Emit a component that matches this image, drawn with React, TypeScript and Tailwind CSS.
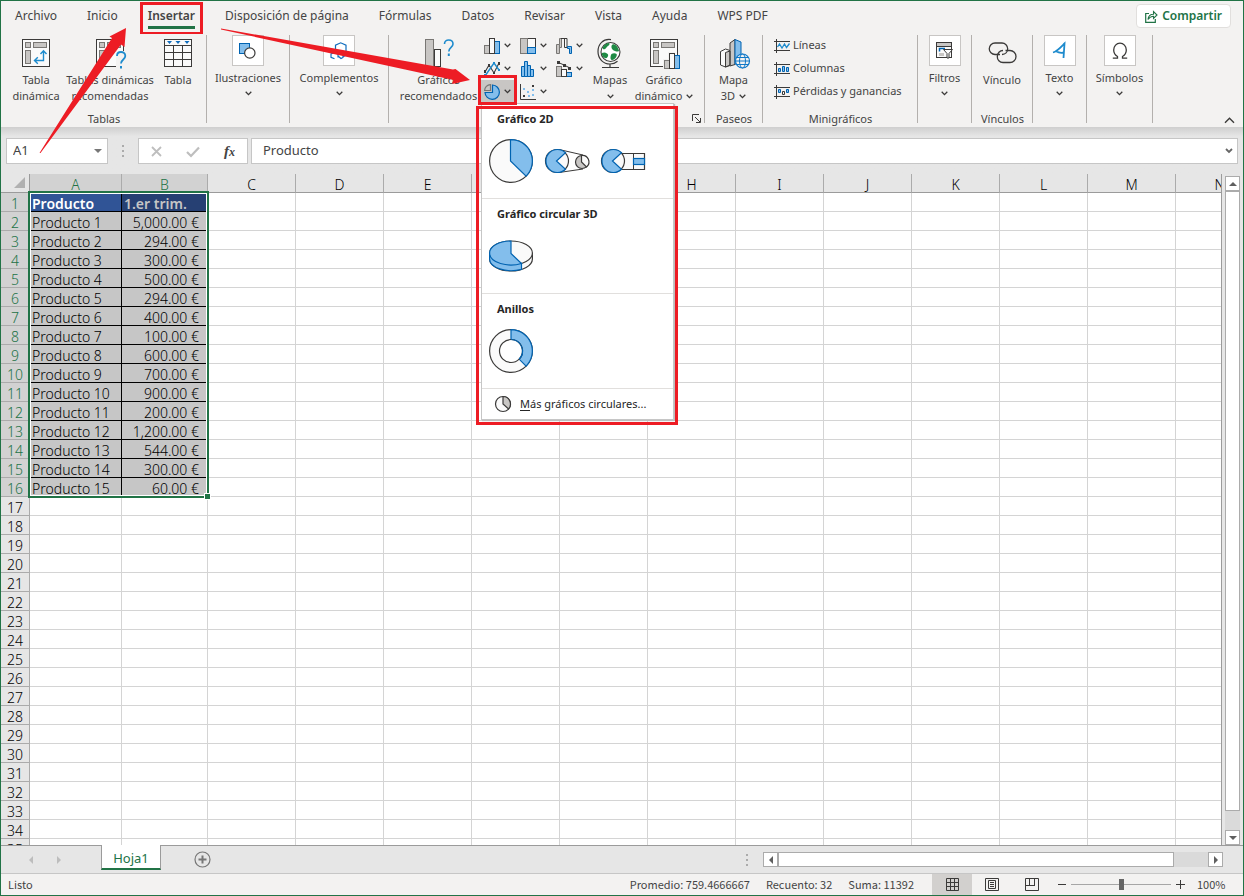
import React from 'react';
import clsx from 'clsx';

const TABS = [
  'Archivo',
  'Inicio',
  'Insertar',
  'Disposición de página',
  'Fórmulas',
  'Datos',
  'Revisar',
  'Vista',
  'Ayuda',
  'WPS PDF',
];

const COLUMNS = 'ABCDEFGHIJKLMN'.split('');
const ROW_COUNT = 35;

const DATA = [
  ['Producto', '1.er trim.'],
  ['Producto 1', '5,000.00 €'],
  ['Producto 2', '294.00 €'],
  ['Producto 3', '300.00 €'],
  ['Producto 4', '500.00 €'],
  ['Producto 5', '294.00 €'],
  ['Producto 6', '400.00 €'],
  ['Producto 7', '100.00 €'],
  ['Producto 8', '600.00 €'],
  ['Producto 9', '700.00 €'],
  ['Producto 10', '900.00 €'],
  ['Producto 11', '200.00 €'],
  ['Producto 12', '1,200.00 €'],
  ['Producto 13', '544.00 €'],
  ['Producto 14', '300.00 €'],
  ['Producto 15', '60.00 €'],
];

const DARK = '#3b3a39';
const GREY = '#c8c6c4';
const BLUE = '#0063b1';
const SKY = '#83beec';
const PAPER = '#fafafa';

/* ---------- Icons ---------- */

function Chevron({ className = '' }: { className?: string }) {
  return (
    <svg width="7" height="5" viewBox="0 0 7 5" className={clsx('shrink-0', className)} aria-hidden="true">
      <path d="M0.7 0.8 3.5 3.6 6.3 0.8" fill="none" stroke="#3b3a39" strokeWidth="1.3" />
    </svg>
  );
}

function Triangle({ dir, color = '#5f5f5f' }: { dir: 'up' | 'down' | 'left' | 'right'; color?: string }) {
  const points = {
    up: '0,6 8,6 4,2',
    down: '0,2 8,2 4,6',
    left: '6,0 6,8 2,4',
    right: '2,0 2,8 6,4',
  };
  return (
    <svg width="8" height="8" viewBox="0 0 8 8" className="shrink-0" aria-hidden="true">
      <polygon points={points[dir]} fill={color} />
    </svg>
  );
}

function Icon({ w = 28, h = 28, children }: { w?: number; h?: number; children: React.ReactNode }) {
  return (
    <svg width={w} height={h} viewBox={`0 0 ${w} ${h}`} fill="none" className="shrink-0 overflow-visible" aria-hidden="true">
      {children}
    </svg>
  );
}

// Frame with header strips shared by the pivot icons
function PivotFrame() {
  return (
    <>
      <rect x="0.5" y="0.5" width="27" height="27" fill={PAPER} stroke={DARK} />
      <rect x="3.5" y="3.5" width="5" height="5" fill={GREY} stroke="#797774" />
      <rect x="11.5" y="3.5" width="13" height="5" fill={GREY} stroke="#797774" />
      <rect x="3.5" y="11.5" width="5" height="13" fill={GREY} stroke="#797774" />
    </>
  );
}

const PivotIcon = () => (
  <Icon>
    <PivotFrame />
    <path d="M21.5 12v9.5H13M18.5 15l3-3.3 3 3.3M15.8 18.3l-3.3 3.2 3.3 3.2" stroke="#1e8bcd" strokeWidth="1.4" />
  </Icon>
);

const PivotQuestionIcon = () => (
  <Icon>
    <PivotFrame />
    <path d="M20 12h9v18h-9z" fill="#f3f2f1" />
    <path d="M21 17c0-2.6 1.8-4 4-4s4.3 1.4 4.3 4c0 3.5-4.3 3.5-4.3 7.5" stroke="#1e8bcd" strokeWidth="1.8" />
    <path d="M25 27v2.5" stroke="#1e8bcd" strokeWidth="2" />
  </Icon>
);

const TableIcon = () => (
  <Icon>
    <rect x="0.5" y="0.5" width="27" height="27" fill={PAPER} stroke={DARK} />
    <path d="M0 6.5h28M0 13.5h28M0 20.5h28M9.5 6v22M18.5 6v22" stroke={DARK} />
    <path d="M3 2h5L5.5 5zM11.5 2h5L14 5zM20.5 2h5L23 5z" fill="#0f6cbd" />
  </Icon>
);

const ShapesIcon = () => (
  <Icon w={18} h={18}>
    <rect x="0.5" y="1.5" width="10" height="10" fill={SKY} stroke={BLUE} />
    <circle cx="10.8" cy="11" r="5.2" fill="#fff" stroke={DARK} strokeWidth="1.2" />
  </Icon>
);

const AddinsIcon = () => (
  <Icon w={18} h={18}>
    <path d="M5.5 9V3.2L10.7.8 16 3.2v10l-2.5 1.3M8 15.5v-3.3L4.8 10.5 1 12v3.3l3.5 1.5M8 14l3 2.5 2-1v-4" stroke="#0f6cbd" strokeWidth="1.2" />
  </Icon>
);

const RecommendedChartsIcon = () => (
  <Icon>
    <rect x="0.5" y="0.5" width="8" height="27" fill={GREY} stroke="#797774" />
    <rect x="9.5" y="10.5" width="6" height="17" fill={PAPER} stroke={DARK} />
    <path d="M19.5 5c0-2.6 1.8-4 4.2-4S28 2.4 28 5c0 3.3-4.2 3.5-4.2 7.5" stroke="#1e8bcd" strokeWidth="1.6" />
    <path d="M23.8 14.5V17" stroke="#1e8bcd" strokeWidth="2" />
  </Icon>
);

const ColumnsIcon = () => (
  <Icon w={16} h={16}>
    <rect x="0.5" y="7.5" width="5" height="8" fill={GREY} stroke="#797774" />
    <rect x="10.5" y="3.5" width="5" height="12" fill={SKY} stroke={BLUE} />
    <rect x="5.5" y="0.5" width="5" height="15" fill={PAPER} stroke={DARK} />
  </Icon>
);

const HierarchyIcon = () => (
  <Icon w={16} h={16}>
    <rect x="7.5" y="0.5" width="8" height="9" fill={PAPER} stroke={DARK} />
    <rect x="0.5" y="0.5" width="7" height="15" fill={GREY} stroke="#797774" />
    <rect x="7.5" y="9.5" width="8" height="6" fill={SKY} stroke={BLUE} />
  </Icon>
);

const WaterfallIcon = () => (
  <Icon w={16} h={16}>
    <path d="M.5 15.5v-9h3v9zM3.5 6.5V.5h2v9h-2" fill={GREY} stroke="#797774" />
    <path d="M5 .5h6v9H8.5V.5" fill={PAPER} stroke={DARK} />
    <path d="M11.5 8.5h4v7h-2v-5h-2z" fill={SKY} stroke={BLUE} />
  </Icon>
);

const LinesIcon = () => (
  <Icon w={16} h={16}>
    <path d="M1 11 5 4l5 8 5-10" stroke={DARK} strokeWidth="1.1" />
    <path d="M1 15 10 2l5 7" stroke="#1e8bcd" strokeWidth="1.4" />
    <path d="M0 9h2v3H0zM4 3h2v3H4zM9 11h2v2H9zM14 1h2v3h-2z" fill={DARK} />
    <path d="M0 13h2v3H0zM9 1h2v2H9zM14 8h2v2h-2z" fill="#1e8bcd" />
  </Icon>
);

const HistogramIcon = () => (
  <Icon w={16} h={16}>
    <path d="M1.5 15.5v-10h3v10zM4.5 15.5V.5h3v15zM7.5 15.5v-11h3v11zM10.5 15.5v-7h3v7z" fill={SKY} stroke={BLUE} />
  </Icon>
);

const ComboIcon = () => (
  <Icon w={16} h={16}>
    <rect x="0.5" y="5.5" width="5" height="10" fill={GREY} stroke="#797774" />
    <rect x="10.5" y="11.5" width="5" height="4" fill={SKY} stroke={BLUE} />
    <rect x="5.5" y="8.5" width="5" height="7" fill={PAPER} stroke={DARK} />
    <path d="M2.5 1.5 8 4l6 3" stroke={DARK} />
    <path d="M1 0h3v3H1zM7 3h3v3H7zM12 6h3v3h-3z" fill={DARK} />
  </Icon>
);

const PieIcon = () => (
  <Icon w={16} h={16}>
    <path d="M8.5 8.5V1A7.2 7.2 0 1 1 1 8.5z" fill={SKY} stroke={BLUE} strokeWidth="1.2" />
    <path d="M6.5 6.5V.6A6 6 0 0 0 .6 6.5z" fill={GREY} stroke="#797774" strokeWidth="1.2" />
  </Icon>
);

const ScatterIcon = () => (
  <Icon w={16} h={16}>
    <path d="M.5 0v15.500H16" stroke={DARK} />
    <path d="M3 11h2v2H3zM12 1h2v2h-2z" fill={DARK} />
    <path d="M3 4h2v2H3zM7 7h2v2H7zM12 5h2v2h-2zM8 11h2v2H8zM12 10h2v2h-2z" fill={SKY} />
  </Icon>
);

const GlobeIcon = () => (
  <Icon w={26} h={30}>
    <circle cx="13.5" cy="13" r="9.5" fill="#fff" stroke={DARK} strokeWidth="1.1" />
    <path d="M6 8c1.500-2.500 4-4 6-4 1 1 .5 2-1 3S9 9.500 8 10 5 10.500 6 8zM14.500 7c.5-2 2.500-2.500 4-1 2 1.500 3.500 4.500 3.500 6-1.500 1-2.500.5-4 0s-4-2-3.500-5zM5 14c2-1 3.500-.5 5 .5s1.500 2 .5 3.500-2 1.500-3.500.5-2.500-3-2-4.500zM14.500 15c1.500-1 4-1 5 0s-.5 4-2 5-2.500 1.500-3.500.5-.5-4 .5-5.500z" fill="#1f8a44" />
    <path d="M14 .6C6-.5 1 5 1 12.500S6.500 25 13 25M13 25c3 0 5.500-1 7.500-2.800M13 25v3.500M5 28.500h17" stroke={DARK} strokeWidth="1.2" />
  </Icon>
);

const PivotChartIcon = () => (
  <Icon>
    <PivotFrame />
    <path d="M13 30V20h5v-7h7v3h5v15z" fill="#f3f2f1" />
    <rect x="14.5" y="21.5" width="5" height="8" fill={GREY} stroke="#797774" />
    <rect x="24.5" y="16.5" width="5" height="13" fill={SKY} stroke={BLUE} />
    <rect x="19.5" y="14.5" width="5" height="15" fill={PAPER} stroke={DARK} />
  </Icon>
);

const Map3DIcon = () => (
  <Icon>
    <path d="M.5 12.500 5.500 10l4.500 1.500v15L5.500 28l-5-2z" fill={PAPER} stroke={DARK} />
    <path d="M5.500 13.500 10 12v14l-4.500 2zM10 4l5-3.500v25L10 27z" fill={GREY} stroke={DARK} />
    <path d="M15 .5 21 3v22h-6z" fill={SKY} stroke={BLUE} />
    <circle cx="22.500" cy="22" r="7" fill="#f3f2f1" stroke="#0f78c8" strokeWidth="1.2" />
    <ellipse cx="22.500" cy="22" rx="3" ry="7" stroke="#0f78c8" />
    <path d="M16.500 18.500h12M15.500 22h14M16.500 25.500h12" stroke="#0f78c8" />
  </Icon>
);

const SparkFrame = () => <path d="M2.500 0v14M0 2.500h16M0 11.500h16" stroke={DARK} />;

const SparkLineIcon = () => (
  <Icon w={16} h={14}>
    <SparkFrame />
    <path d="m3.500 8 2-3 2.500 4 2.500-4 2 3.500 3-4" stroke="#1e8bcd" strokeWidth="1.3" />
  </Icon>
);

const SparkColumnIcon = () => (
  <Icon w={16} h={14}>
    <SparkFrame />
    <path d="M4.500 9.500v-3h2v3zM8.500 9.500v-5h2v5zM12.500 9.500v-4h2v4z" fill={SKY} stroke={BLUE} />
  </Icon>
);

const SparkWinLossIcon = () => (
  <Icon w={16} h={14}>
    <SparkFrame />
    <path d="M4.500 7.500v-3h2v3zM12.500 7.500v-3h2v3z" fill={SKY} stroke={BLUE} />
    <path d="M8.500 9.500v-3h2v3z" fill={PAPER} stroke={DARK} />
  </Icon>
);

const FilterIcon = () => (
  <Icon w={17} h={17}>
    <rect x="0.5" y="0.5" width="15" height="15" fill={PAPER} stroke={DARK} />
    <path d="M1 1h14v3H1z" fill={GREY} />
    <path d="M0 4.500h16" stroke={DARK} />
    <path d="M3.500 9.500v-3H9" stroke={BLUE} strokeWidth="1.5" />
    <path d="M3 11h5v3H3z" fill={GREY} />
    <path d="M7.500 7.500h9l-3.500 4v4.500h-2v-4.500z" fill="#fff" stroke={DARK} />
  </Icon>
);

const LinkIcon = () => (
  <Icon>
    <path d="M12 15.500H7a5.700 5.700 0 0 1 0-11.500h7a5.700 5.700 0 0 1 5.700 5.700c0 3.500-2.500 5.800-5.700 5.800" stroke={DARK} strokeWidth="1.3" />
    <path d="M17.500 11.500h4.500a5.700 5.700 0 0 1 0 12h-7a5.700 5.700 0 0 1-5.700-6c0-3.500 2.500-6 5.700-6" stroke={DARK} strokeWidth="1.3" />
  </Icon>
);

const TextIcon = () => (
  <Icon w={16} h={18}>
    <path d="M1 10.500C5 9.500 9 5 12.500 1.500L11.500 16M4.500 9.500C7 11 9.500 11 12 10.500" stroke="#1e8bcd" strokeWidth="1.8" />
  </Icon>
);

const OmegaIcon = () => (
  <Icon w={16} h={18}>
    <path d="M.8 16.200h4.700v-1.700C3 13 1.700 10.800 1.700 8c0-4 2.800-6.800 6.300-6.800S14.300 4 14.300 8c0 2.800-1.300 5-3.800 6.500v1.700h4.700" stroke={DARK} strokeWidth="1.3" />
  </Icon>
);

/* ---------- Ribbon ---------- */

function BigButton({
  icon,
  lines,
  width,
  arrow,
}: {
  icon: React.ReactNode;
  lines: string[];
  width: string;
  arrow?: 'inline' | 'below';
}) {
  return (
    <button type="button" className={clsx('flex shrink-0 flex-col items-center pt-1', width)}>
      <span className="flex h-[34px] items-start pt-px">{icon}</span>
      {lines.map((line, i) => (
        <span key={line} className="flex h-4 items-center gap-1 whitespace-nowrap leading-4">
          {line}
          {arrow === 'inline' && i === lines.length - 1 && <Chevron />}
        </span>
      ))}
      {arrow === 'below' && (
        <span className="flex h-4 items-center">
          <Chevron />
        </span>
      )}
    </button>
  );
}

function BoxedButton({ icon, label }: { icon: React.ReactNode; label: string }) {
  return (
    <button type="button" className="flex w-full flex-col items-center pt-px pr-px">
      <span className="flex h-[31px] w-8 items-center justify-center border border-[#c8c6c4] bg-white">{icon}</span>
      <span className="mt-1 h-4 whitespace-nowrap leading-4">{label}</span>
      <Chevron className="mt-[5px]" />
    </button>
  );
}

function Group({ label, width, children }: { label?: string; width: string; children: React.ReactNode }) {
  return (
    <section className={clsx('relative flex shrink-0 flex-col', width)}>
      <div className="flex h-[77px]">{children}</div>
      {label && <p className="h-4 text-center leading-4">{label}</p>}
      <span className="absolute right-0 top-px h-[88px] w-px bg-[#b3b0ad]" />
    </section>
  );
}

function PieMenu() {
  return (
    <div className="absolute left-px top-full z-20 w-[193px] border border-[#c6c6c6] bg-white text-[#262626] shadow-[1px_1px_1px_#bdbdbd]">
      <div className="h-[95px] border-b border-[#e1dfdd] px-[7px] pt-1.5">
        <h3 className="pl-2 font-bold leading-[17px]">Gráfico 2D</h3>
        <div className="mt-3 flex items-center gap-3">
          <button type="button" aria-label="Circular">
            <Icon w={44} h={44}>
              <circle cx="22" cy="22" r="21.400" fill={PAPER} stroke={DARK} strokeWidth="1.2" />
              <path d="M21.500.6V22L37.100 37.100A21.400 21.400 0 0 0 21.500.6z" fill={SKY} stroke={BLUE} strokeWidth="1.2" />
            </Icon>
          </button>
          <button type="button" aria-label="Subgráfico circular">
            <Icon w={44} h={26}>
              <path d="M14 1.500 38 7M14 24.500 38 21" stroke={DARK} />
              <circle cx="12" cy="13" r="11.500" fill={PAPER} stroke={DARK} strokeWidth="1.2" />
              <path d="M11.500 13 20.500 4.800a11.500 11.500 0 1 0 0 16.400z" fill={SKY} stroke={BLUE} strokeWidth="1.2" />
              <circle cx="37" cy="14" r="6.500" fill={GREY} stroke={DARK} strokeWidth="1.2" />
              <path d="M36.500 7.500V14l5 5a6.500 6.500 0 0 0-5-11.500z" fill={PAPER} stroke={DARK} strokeWidth="1.2" />
            </Icon>
          </button>
          <button type="button" aria-label="Circular con subgráfico de barras">
            <Icon w={44} h={26}>
              <path d="M19 5.500h24.500v16H19z" fill={PAPER} stroke={DARK} strokeWidth="1.2" />
              <circle cx="12" cy="13" r="11.500" fill={PAPER} stroke={DARK} strokeWidth="1.2" />
              <path d="M11.500 13 20.500 4.800a11.500 11.500 0 1 0 0 16.400z" fill={SKY} stroke={BLUE} strokeWidth="1.2" />
              <path d="M32.500 5.500v16" stroke={DARK} />
              <rect x="32.500" y="10.500" width="11" height="6" fill={SKY} stroke={BLUE} strokeWidth="1.2" />
            </Icon>
          </button>
        </div>
      </div>
      <div className="h-[95px] border-b border-[#e1dfdd] px-[7px] pt-1.5">
        <h3 className="pl-2 font-bold leading-[17px]">Gráfico circular 3D</h3>
        <button type="button" aria-label="Circular 3D" className="mt-[18px] block">
          <Icon w={44} h={34}>
            <path d="M.6 13v6c0 6.500 9.500 12 21.400 12s21.400-5.500 21.400-12v-6" fill={PAPER} stroke={DARK} strokeWidth="1.2" />
            <ellipse cx="22" cy="13" rx="21.400" ry="12" fill={PAPER} stroke={DARK} strokeWidth="1.2" />
            <path d="M.6 13v6C.6 27.500 17 33.500 32.500 29.300V23.500z" fill={SKY} stroke={BLUE} strokeWidth="1.2" />
            <path d="M22 1v12.500l10.500 10C19 27.500.6 23 .6 13 .6 6.500 10 1 22 1z" fill={SKY} stroke={BLUE} strokeWidth="1.2" />
          </Icon>
        </button>
      </div>
      <div className="h-[95px] border-b border-[#e1dfdd] px-[7px] pt-1.5">
        <h3 className="pl-2 font-bold leading-[17px]">Anillos</h3>
        <button type="button" aria-label="Anillo" className="mt-3 block">
          <Icon w={44} h={44}>
            <circle cx="22" cy="22" r="21.400" fill={PAPER} stroke={DARK} strokeWidth="1.2" />
            <path d="M22 .6v9.900a11.500 11.500 0 0 1 8.100 19.600l7 7A21.400 21.400 0 0 0 22 .6z" fill={SKY} stroke={BLUE} strokeWidth="1.2" />
            <circle cx="22" cy="22" r="11.500" fill="#fff" stroke={DARK} strokeWidth="1.2" />
            <path d="M22 10.500a11.500 11.500 0 0 1 8.100 19.600" stroke={BLUE} strokeWidth="1.2" />
          </Icon>
        </button>
      </div>
      <button type="button" className="flex h-[30px] w-full items-center gap-2 pl-[13px]">
        <Icon w={17} h={17}>
          <circle cx="8" cy="8" r="7.500" fill={PAPER} stroke={DARK} strokeWidth="1.2" />
          <path d="M8 .5V8l5.500 5A7.500 7.500 0 0 0 8 .5z" fill={GREY} stroke={DARK} strokeWidth="1.2" />
        </Icon>
        <span className="whitespace-nowrap">
          <u className="underline-offset-2">M</u>ás gráficos circulares...
        </span>
      </button>
      <span className="pointer-events-none absolute -bottom-1.5 -left-1.5 -right-[5px] top-0.5 border-[3px] border-[#ed1c24]" />
    </div>
  );
}

const CHART_BUTTONS = [
  { label: 'Columnas', icon: <ColumnsIcon /> },
  { label: 'Jerarquía', icon: <HierarchyIcon /> },
  { label: 'Cascada', icon: <WaterfallIcon /> },
  { label: 'Líneas', icon: <LinesIcon /> },
  { label: 'Estadística', icon: <HistogramIcon /> },
  { label: 'Cuadro combinado', icon: <ComboIcon /> },
  { label: 'Circular', icon: <PieIcon />, open: true },
  { label: 'Dispersión', icon: <ScatterIcon /> },
];

function ChartGallery() {
  return (
    <div className="grid shrink-0 grid-cols-[repeat(3,36px)] auto-rows-[23px]">
      {CHART_BUTTONS.map(({ label, icon, open }) => (
        <div key={label} className="relative">
          <button
            type="button"
            aria-label={label}
            className={clsx('flex h-full w-full items-center gap-1 pl-1', open && 'bg-[#c8c6c4]')}
          >
            {icon}
            <Chevron />
          </button>
          {open && (
            <>
              <PieMenu />
              <span className="pointer-events-none absolute -left-0.5 -right-px -top-[5px] -bottom-0.5 z-30 border-[3px] border-[#ed1c24]" />
            </>
          )}
        </div>
      ))}
    </div>
  );
}

function Ribbon() {
  return (
    <div className="relative z-10 flex h-[93px] bg-[#f3f2f1] text-[11px] text-[#444]">
      <Group label="Tablas" width="w-[206px]">
        <div className="flex pl-2">
          <BigButton icon={<PivotIcon />} lines={['Tabla', 'dinámica']} width="w-[54px]" />
          <BigButton icon={<PivotQuestionIcon />} lines={['Tablas dinámicas', 'recomendadas']} width="w-[94px]" />
          <BigButton icon={<TableIcon />} lines={['Tabla']} width="w-[42px]" />
        </div>
      </Group>
      <Group width="w-[83px]">
        <BoxedButton icon={<ShapesIcon />} label="Ilustraciones" />
      </Group>
      <Group width="w-[99px]">
        <BoxedButton icon={<AddinsIcon />} label="Complementos" />
      </Group>
      <Group width="w-[316px]">
        <div className="flex pl-2">
          <BigButton icon={<RecommendedChartsIcon />} lines={['Gráficos', 'recomendados']} width="w-[83px]" />
          <ChartGallery />
          <BigButton icon={<GlobeIcon />} lines={['Mapas']} width="w-11" arrow="below" />
          <BigButton icon={<PivotChartIcon />} lines={['Gráfico', 'dinámico']} width="w-16" arrow="inline" />
        </div>
        <button type="button" aria-label="Ver todos los gráficos" className="absolute bottom-1 right-1">
          <Icon w={9} h={9}>
            <path d="M.5 7V.5H7M3 3l5 5M8.500 4v4.500H4" stroke={DARK} />
          </Icon>
        </button>
      </Group>
      <Group label="Paseos" width="w-[58px]">
        <BigButton icon={<Map3DIcon />} lines={['Mapa', '3D']} width="w-[57px]" arrow="inline" />
      </Group>
      <Group label="Minigráficos" width="w-[155px]">
        <div className="pl-[11px]">
          {[
            { label: 'Líneas', icon: <SparkLineIcon /> },
            { label: 'Columnas', icon: <SparkColumnIcon /> },
            { label: 'Pérdidas y ganancias', icon: <SparkWinLossIcon /> },
          ].map(item => (
            <button key={item.label} type="button" className="flex h-[23px] items-center gap-[3px] whitespace-nowrap">
              {item.icon}
              {item.label}
            </button>
          ))}
        </div>
      </Group>
      <Group width="w-[54px]">
        <BoxedButton icon={<FilterIcon />} label="Filtros" />
      </Group>
      <Group label="Vínculos" width="w-[61px]">
        <BigButton icon={<LinkIcon />} lines={['Vínculo']} width="w-[60px]" />
      </Group>
      <Group width="w-[54px]">
        <BoxedButton icon={<TextIcon />} label="Texto" />
      </Group>
      <Group width="w-[66px]">
        <BoxedButton icon={<OmegaIcon />} label="Símbolos" />
      </Group>
      <button type="button" aria-label="Contraer la cinta" className="ml-auto mr-2 self-end pb-[3px]">
        <Icon w={11} h={7}>
          <path d="m1 5.800 4.500-4.500L10 5.800" stroke={DARK} strokeWidth="1.4" />
        </Icon>
      </button>
    </div>
  );
}

function TabBar() {
  return (
    <header className="flex h-[33px] items-start bg-[#f3f2f1] pl-3.5 pr-3 pt-[3px] text-xs text-[#444]">
      <nav className="flex gap-[30px]">
        {TABS.map(tab => (
          <button
            key={tab}
            type="button"
            className={clsx('relative h-6 whitespace-nowrap leading-6', tab === 'Insertar' && 'font-semibold')}
          >
            {tab}
            {tab === 'Insertar' && (
              <>
                <span className="absolute inset-x-0 -bottom-px h-[3px] bg-[#217346]" />
                <span className="pointer-events-none absolute -inset-x-2 -top-0.5 -bottom-[7px] border-[3px] border-[#ed1c24]" />
              </>
            )}
          </button>
        ))}
      </nav>
      <button
        type="button"
        className="ml-auto flex h-6 items-center gap-1 rounded-sm border border-[#e1dfdd] bg-white px-2 font-semibold text-[#217346]"
      >
        <Icon w={13} h={13}>
          <path d="M4 3.500H.7v8.800h9.600V9" stroke="#217346" strokeWidth="1.2" />
          <path d="M3 9.500C3.300 6 5.500 4.200 8.500 4.200V1.500L12 5 8.500 8.500V6.200C6 6.200 4.500 7.200 3 9.500z" stroke="#217346" strokeWidth="1.1" />
        </Icon>
        Compartir
      </button>
    </header>
  );
}

function FormulaBar() {
  return (
    <div className="flex h-[47px] items-start bg-[#e6e6e6] bg-linear-to-b from-[#cfcfcf] to-[#e6e6e6] to-20% pl-[5px] pr-[5px] pt-[11px] text-[13px] text-[#444]">
      <div className="flex h-[26px] w-[102px] shrink-0 items-center border border-[#c6c6c6] bg-white pr-[5px]">
        <input aria-label="Cuadro de nombres" defaultValue="A1" className="w-full min-w-0 bg-transparent pl-1.5 outline-none" />
        <button type="button" aria-label="Elegir nombre">
          <Triangle dir="down" color="#777" />
        </button>
      </div>
      <span className="grid h-[26px] w-[30px] shrink-0 content-center justify-center gap-[3px]">
        <i className="size-0.5 bg-[#ababab]" />
        <i className="size-0.5 bg-[#ababab]" />
        <i className="size-0.5 bg-[#ababab]" />
      </span>
      <div className="flex h-[26px] w-[110px] shrink-0 items-center justify-between border border-[#c6c6c6] bg-white pl-3 pr-3">
        <button type="button" aria-label="Cancelar">
          <Icon w={11} h={11}>
            <path d="m1 1 9 9M10 1l-9 9" stroke="#bebebe" strokeWidth="1.8" />
          </Icon>
        </button>
        <button type="button" aria-label="Introducir">
          <Icon w={14} h={11}>
            <path d="m1 6 4 4 8-8.500" stroke="#bebebe" strokeWidth="2.2" />
          </Icon>
        </button>
        <button type="button" aria-label="Insertar función" className="font-['Liberation_Serif'] text-[15px] font-bold italic leading-5">
          f<span className="text-xs">x</span>
        </button>
      </div>
      <div className="ml-[3px] flex h-[26px] flex-1 items-center border border-[#c6c6c6] bg-white pr-1">
        <input aria-label="Barra de fórmulas" defaultValue="Producto" className="min-w-0 flex-1 bg-transparent pl-[11px] outline-none" />
        <button type="button" aria-label="Expandir">
          <Icon w={8} h={6}>
            <path d="m1 1 3 3 3-3" stroke="#666" strokeWidth="1.8" />
          </Icon>
        </button>
      </div>
    </div>
  );
}

/* ---------- Sheet ---------- */

function cellClass(row: number, col: number) {
  const filled = row < DATA.length && col < 2;
  if (!filled) return 'border-[#d4d4d4]';
  if (row === 0) {
    return clsx('border-black pl-0.5 text-left font-semibold', col === 0 ? 'bg-[#305496] text-white' : 'bg-[#264073] text-[#c6c6c6]');
  }
  return clsx('border-black bg-[#c6c6c6]', col === 0 ? 'pl-0.5 text-left' : 'pr-2 text-right');
}

function Sheet() {
  return (
    <div className="relative min-w-0 flex-1 overflow-hidden border-r border-[#9b9b9b] bg-white">
      <table className="w-[1263px] table-fixed border-separate border-spacing-0 text-sm font-light text-black">
        <colgroup>
          <col className="w-[29px]" />
          <col className="w-[92px]" />
          <col className="w-[86px]" />
          {COLUMNS.slice(2).map(col => (
            <col key={col} className="w-[88px]" />
          ))}
        </colgroup>
        <thead>
          <tr>
            <th className="h-[19px] border-b border-r border-[#9b9b9b] bg-[#e6e6e6] p-0">
              <svg width="12" height="12" viewBox="0 0 12 12" className="ml-auto mr-[3px]" aria-hidden="true">
                <path d="M11 0v11H0z" fill="#b1b1b1" />
              </svg>
            </th>
            {COLUMNS.map((col, i) => (
              <th
                key={col}
                scope="col"
                className={clsx(
                  'h-[19px] border-b border-r border-b-[#9b9b9b] border-r-[#ababab] p-0 pt-[3px] font-light leading-[15px]',
                  i < 2 ? 'bg-[#d2d2d2] text-[#217346]' : 'bg-[#e6e6e6]'
                )}
              >
                {col}
              </th>
            ))}
          </tr>
        </thead>
        <tbody>
          {Array.from({ length: ROW_COUNT }, (_, row) => (
            <tr key={row}>
              <th
                scope="row"
                className={clsx(
                  'h-[19px] border-b border-r border-[#ababab] p-0 pt-[3px] font-light leading-[15px]',
                  row < DATA.length ? 'bg-[#d2d2d2] text-[#217346]' : 'bg-[#e6e6e6]'
                )}
              >
                {row + 1}
              </th>
              {COLUMNS.map((col, i) => (
                <td
                  key={col}
                  className={clsx('h-[19px] whitespace-nowrap border-b border-r p-0 pt-[3px] leading-[15px]', cellClass(row, i))}
                >
                  {i < 2 && DATA[row]?.[i]}
                </td>
              ))}
            </tr>
          ))}
        </tbody>
      </table>
      {/* selection A1:B16 */}
      <div className="pointer-events-none absolute left-[27px] top-[17px] h-[307px] w-[181px] border-2 border-[#217346]">
        <div className="h-full border border-white" />
        <span className="absolute -bottom-1 -right-1 size-[7px] border border-white bg-[#217346]" />
      </div>
    </div>
  );
}

function VerticalScroll() {
  return (
    <div className="flex w-[21px] shrink-0 flex-col bg-[#e6e6e6] pl-[3px] pr-[3px] pt-0.5">
      <button type="button" aria-label="Subir" className="flex h-[15px] items-center justify-center border border-[#ababab] bg-white">
        <Triangle dir="up" />
      </button>
      <div className="flex-1 bg-[#dadada]">
        <div className="h-[97%] border border-[#ababab] bg-white" />
      </div>
      <button type="button" aria-label="Bajar" className="flex h-[15px] items-center justify-center border border-[#ababab] bg-white">
        <Triangle dir="down" />
      </button>
    </div>
  );
}

function SheetTabs() {
  return (
    <div className="flex h-7 shrink-0 border-t border-[#9b9b9b] bg-[#e6e6e6]">
      <div className="flex w-[100px] shrink-0 items-center justify-center gap-5 pr-3">
        <button type="button" aria-label="Hoja anterior">
          <Triangle dir="left" color="#bdbdbd" />
        </button>
        <button type="button" aria-label="Hoja siguiente">
          <Triangle dir="right" color="#bdbdbd" />
        </button>
      </div>
      <button
        type="button"
        className="-mt-px h-[25px] w-[60px] border-x border-b-2 border-x-[#9b9b9b] border-b-[#217346] bg-white pt-0.5 text-[13px] leading-5 text-[#217346]"
      >
        Hoja1
      </button>
      <button type="button" aria-label="Hoja nueva" className="ml-[33px] self-center">
        <Icon w={17} h={17}>
          <circle cx="8.500" cy="8.500" r="7.500" stroke="#777" strokeWidth="1.2" />
          <path d="M8.500 4.500v8M4.500 8.500h8" stroke="#777" strokeWidth="2" />
        </Icon>
      </button>
      <span className="ml-auto mr-[15px] grid content-center gap-[3px]">
        <i className="size-0.5 bg-[#ababab]" />
        <i className="size-0.5 bg-[#ababab]" />
        <i className="size-0.5 bg-[#ababab]" />
      </span>
      <div className="mr-5 flex h-[15px] w-[37%] self-center">
        <button type="button" aria-label="Izquierda" className="flex w-[15px] items-center justify-center border border-[#ababab] bg-white">
          <Triangle dir="left" />
        </button>
        <div className="flex-1 bg-[#dadada]">
          <div className="h-full w-[92%] border border-[#ababab] bg-white" />
        </div>
        <button type="button" aria-label="Derecha" className="flex w-[15px] items-center justify-center border border-[#ababab] bg-white">
          <Triangle dir="right" />
        </button>
      </div>
    </div>
  );
}

function StatusBar() {
  return (
    <footer className="flex h-[22px] shrink-0 items-center border-t border-[#c6c6c6] bg-[#f3f2f1] pl-[7px] pr-[18px] font-['Noto_Sans_CJK_SC','Noto_Sans',sans-serif] text-[11px] text-[#444]">
      <span>Listo</span>
      <div className="ml-auto mr-[18px] flex gap-4 whitespace-nowrap">
        <span>Promedio: 759.4666667</span>
        <span>Recuento: 32</span>
        <span>Suma: 11392</span>
      </div>
      <button type="button" aria-label="Normal" className="flex h-full w-10 items-center justify-center bg-[#d2d0ce]">
        <Icon w={13} h={13}>
          <path d="M.5.5h12v12H.5zM4.500 0v13M8.500 0v13M0 4.500h13M0 8.500h13" stroke={DARK} />
        </Icon>
      </button>
      <button type="button" aria-label="Diseño de página" className="flex h-full w-10 items-center justify-center">
        <Icon w={14} h={13}>
          <path d="M.5.5h13v12H.5zM3.500 2.500h7v8h-7zM5 4.500h4M5 6.500h4M5 8.500h4" stroke={DARK} />
        </Icon>
      </button>
      <button type="button" aria-label="Vista previa de salto de página" className="flex h-full w-10 items-center justify-center">
        <Icon w={14} h={13}>
          <path d="M.5.5h13v12H.5zM4.500 0v7.500M9.500 0v7.500M0 7.500h10" stroke={DARK} />
        </Icon>
      </button>
      <button type="button" aria-label="Alejar" className="ml-1.5 mr-[5px]">
        <Icon w={8} h={9}>
          <path d="M0 4.500h8" stroke={DARK} />
        </Icon>
      </button>
      <input
        type="range"
        aria-label="Zoom"
        defaultValue={50}
        className="h-3 w-[100px] appearance-none bg-[linear-gradient(#a6a6a6,#a6a6a6)] bg-[length:100%_1px] bg-center bg-no-repeat [&::-webkit-slider-thumb]:h-[11px] [&::-webkit-slider-thumb]:w-[5px] [&::-webkit-slider-thumb]:appearance-none [&::-webkit-slider-thumb]:bg-[#666]"
      />
      <button type="button" aria-label="Acercar" className="ml-[5px] mr-3">
        <Icon w={9} h={9}>
          <path d="M0 4.500h9M4.500 0v9" stroke={DARK} />
        </Icon>
      </button>
      <span className="w-7">100%</span>
    </footer>
  );
}

// Red pointers drawn on top of the window
function Arrows() {
  return (
    <svg width="480" height="160" viewBox="0 0 480 160" className="pointer-events-none absolute -left-px -top-px z-30" aria-hidden="true">
      <path d="M39.500 153 112 38 109.500 36.500 126 28 124.500 47 121 44.500 40.500 153z" fill="#ed1c24" />
      <path d="M221 28.500 453 69.500 455.500 69 470 80 452 84 453.500 80 221 29.500z" fill="#ed1c24" />
    </svg>
  );
}

export default function App() {
  return (
    <div className="relative flex h-screen flex-col overflow-hidden border border-[#217346] bg-[#e6e6e6] font-['Noto_Sans','Open_Sans',sans-serif]">
      <TabBar />
      <Ribbon />
      <FormulaBar />
      <main className="flex min-h-0 flex-1">
        <Sheet />
        <VerticalScroll />
      </main>
      <SheetTabs />
      <StatusBar />
      <Arrows />
    </div>
  );
}
